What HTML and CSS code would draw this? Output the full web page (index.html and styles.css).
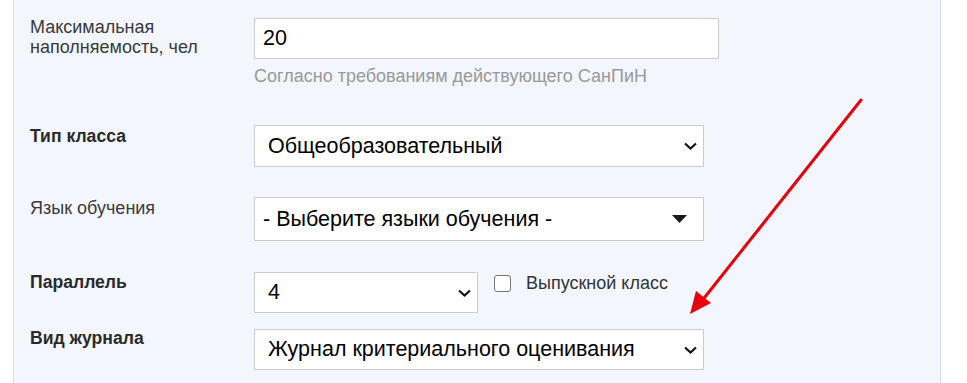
FILE: index.html
```html
<!doctype html>
<html>
<head>
	<meta charset="utf-8" />
	<title>Параметры класса</title>
	<link rel="stylesheet" href="styles.css">
</head>
<body>
	<div class="panel">
		<div class="row row-size">
			<div class="label">Максимальная наполняемость, чел</div>
			<div class="field">
				<div class="input">20</div>
				<div class="hint">Согласно требованиям действующего СанПиН</div>
			</div>
		</div>
		<div class="row row-type">
			<div class="label bold">Тип класса</div>
			<div class="field">
				<div class="select select-type">
					<span>Общеобразовательный</span>
					<svg class="chevron" width="13" height="8" viewBox="0 0 13 8"><path d="M1 1.5 L6.5 6.5 L12 1.5" fill="none" stroke="#111" stroke-width="2.2"/></svg>
				</div>
			</div>
		</div>
		<div class="row row-lang">
			<div class="label">Язык обучения</div>
			<div class="field">
				<div class="select select-lang">
					<span>- Выберите языки обучения -</span>
					<svg class="caret" width="15" height="8" viewBox="0 0 15 8"><path d="M0 0 L15 0 L7.5 8 Z" fill="#1a1a1a"/></svg>
				</div>
			</div>
		</div>
		<div class="row row-par">
			<div class="label bold">Параллель</div>
			<div class="field inline">
				<div class="select select-small">
					<span>4</span>
					<svg class="chevron" width="13" height="8" viewBox="0 0 13 8"><path d="M1 1.5 L6.5 6.5 L12 1.5" fill="none" stroke="#111" stroke-width="2.2"/></svg>
				</div>
				<label class="check"><span class="box"></span>Выпускной класс</label>
			</div>
		</div>
		<div class="row row-journal">
			<div class="label bold">Вид журнала</div>
			<div class="field">
				<div class="select select-type">
					<span>Журнал критериального оценивания</span>
					<svg class="chevron" width="13" height="8" viewBox="0 0 13 8"><path d="M1 1.5 L6.5 6.5 L12 1.5" fill="none" stroke="#111" stroke-width="2.2"/></svg>
				</div>
			</div>
		</div>
	</div>
	<svg class="pointer" width="967" height="383" viewBox="0 0 967 383">
		<line x1="861" y1="100" x2="701" y2="302" stroke="#e8000b" stroke-width="3" stroke-linecap="round"/>
		<path d="M690 314 L696 291 L711 303 Z" fill="#e8000b"/>
	</svg>
</body>
</html>
```
FILE: styles.css
```css
body { margin: 0; background: #fff; font-family: "Liberation Sans", Arial, sans-serif; color: #333; }
.panel { margin-left: 13px; width: 928px; min-height: 383px; box-sizing: border-box; padding: 18px 0 0 16px; background: #f3f6fd; border-left: 1px solid #dde2ea; border-right: 1px solid #d6dbe3; }
.row { display: flex; }
.row-size { margin-bottom: 39px; }
.row-type { margin-bottom: 30px; }
.row-lang { margin-bottom: 31px; }
.row-par { margin-bottom: 16px; }
.label { width: 224px; flex: none; font-size: 18px; line-height: 20px; color: #3a3a3a; }
.row-size .label { margin-top: -1px; }
.label.bold { font-weight: bold; font-size: 17.6px; color: #2a2a2a; }
.row-type .label, .row-lang .label { margin-top: 1px; }
.row-journal .label { margin-top: -1px; }
.field { display: flex; flex-direction: column; }
.field.inline { flex-direction: row; align-items: flex-start; }
.input { width: 465px; height: 41px; box-sizing: border-box; background: #fff; border: 1px solid #ccc; padding: 0 8px; font-size: 21.5px; line-height: 39px; color: #000; }
.hint { margin-top: 7px; font-size: 18px; line-height: 20px; color: #999; }
.select { display: flex; align-items: center; justify-content: space-between; box-sizing: border-box; height: 41px; background: #fff; border: 1px solid #ccc; padding: 0 6px 0 13px; font-size: 21.5px; color: #000; }
.select-type { width: 450px; height: 42px; }
.row-journal .select-type { height: 41px; }
.select-lang { width: 450px; height: 44px; padding: 0 16px 0 8px; }
.select-small { width: 224px; }
.select span { white-space: nowrap; }
.chevron, .caret { flex: none; }
.check { display: flex; align-items: center; margin-left: 16px; margin-top: 1px; font-size: 18px; line-height: 20px; color: #333; }
.box { width: 17px; height: 17px; box-sizing: border-box; border: 1.5px solid #767676; border-radius: 3px; background: #fff; margin-right: 15px; }
.pointer { position: absolute; left: 0; top: 0; pointer-events: none; }
```
